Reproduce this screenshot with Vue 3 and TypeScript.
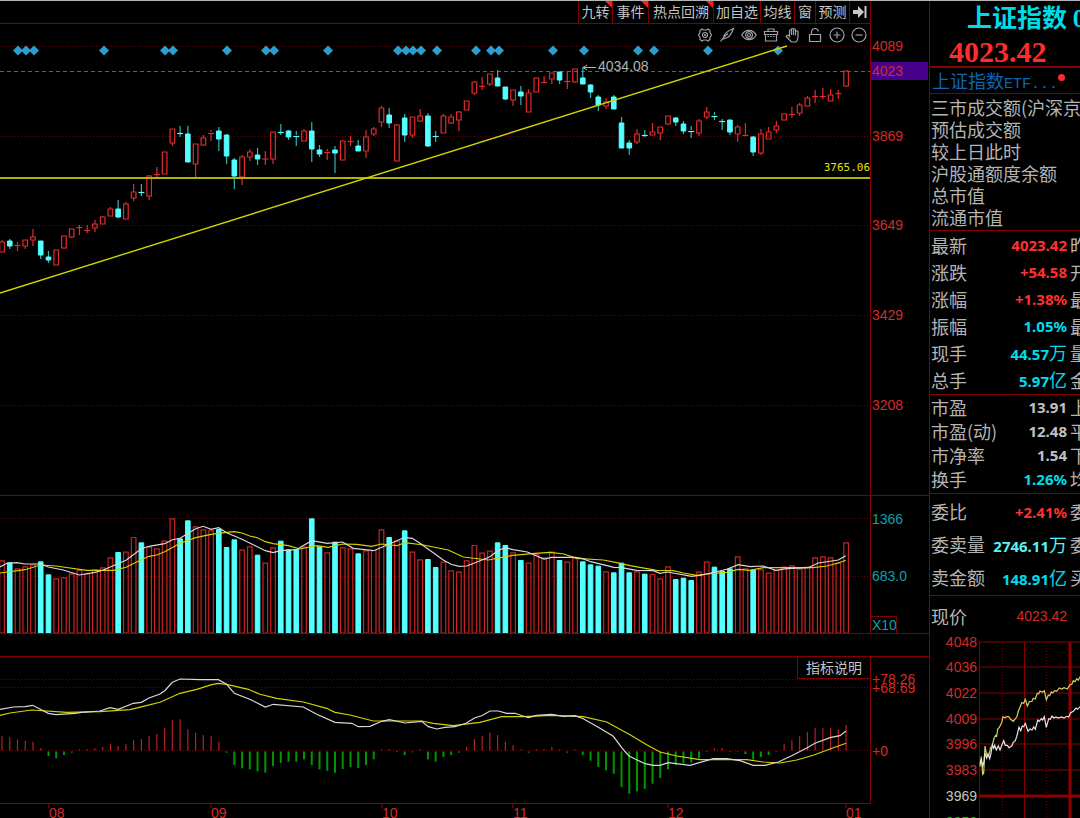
<script setup lang="ts">
type Candle = [dir: number, top: number, bottom: number, high: number, low: number]
type Pair = [number, number]

const PITCH = 7.744
const FIRST = 2

// direction (1 up, 0 down), body top, body bottom, wick top, wick bottom
const candles: Candle[] = [
  [1, 242, 252, 240, 252], [0, 241, 246, 239, 249], [1, 245, 245, 242, 251], [1, 240, 246, 240, 249],
  [1, 237, 240, 229, 246], [0, 241, 255, 241, 259], [0, 257, 260, 251, 263], [1, 250, 265, 250, 265],
  [1, 236, 248, 236, 249], [1, 229, 237, 229, 238], [1, 227, 227, 225, 235], [1, 230, 230, 225, 233],
  [1, 224, 228, 220, 232], [1, 217, 224, 216, 224], [1, 209, 216, 207, 216], [0, 209, 217, 200, 218],
  [1, 204, 219, 202, 219], [1, 192, 198, 184, 201], [0, 192, 192, 184, 196], [1, 176, 196, 175, 200],
  [1, 174, 174, 167, 179], [1, 152, 174, 152, 174], [1, 129, 143, 129, 146], [0, 133, 133, 126, 137],
  [0, 134, 162, 126, 162], [1, 144, 164, 144, 178], [1, 138, 145, 135, 146], [1, 132, 134, 130, 141],
  [0, 131, 139, 127, 151], [0, 135, 156, 134, 164], [0, 160, 176, 158, 189], [1, 157, 177, 155, 185],
  [1, 152, 157, 149, 161], [0, 155, 159, 148, 165], [1, 158, 159, 151, 165], [1, 132, 159, 132, 164],
  [0, 132, 132, 124, 135], [0, 131, 137, 130, 140], [0, 135, 137, 131, 146], [1, 131, 141, 129, 141],
  [0, 131, 149, 122, 162], [0, 150, 154, 145, 157], [1, 151, 153, 149, 160], [0, 150, 153, 146, 173],
  [1, 141, 160, 140, 160], [1, 141, 141, 136, 146], [0, 146, 151, 140, 151], [1, 137, 151, 130, 158],
  [1, 129, 134, 127, 136], [1, 108, 122, 106, 127], [0, 115, 123, 108, 128], [1, 125, 161, 124, 161],
  [0, 118, 135, 114, 142], [1, 117, 135, 117, 138], [1, 116, 121, 109, 122], [0, 116, 146, 113, 147],
  [0, 136, 136, 131, 142], [1, 116, 133, 114, 133], [1, 117, 123, 114, 124], [1, 112, 120, 111, 131],
  [1, 101, 110, 101, 110], [1, 82, 93, 81, 95], [1, 86, 86, 77, 90], [1, 74, 84, 74, 86],
  [0, 78, 86, 70, 86], [0, 87, 99, 87, 100], [1, 90, 100, 90, 106], [0, 92, 96, 86, 105],
  [1, 93, 112, 89, 112], [1, 78, 92, 78, 92], [1, 82, 82, 76, 83], [1, 73, 79, 73, 84],
  [0, 72, 80, 72, 84], [1, 81, 81, 71, 89], [1, 69, 82, 69, 83], [0, 78, 84, 67, 84],
  [0, 85, 92, 84, 98], [0, 97, 105, 95, 111], [1, 102, 106, 98, 109], [0, 97, 109, 95, 109],
  [0, 123, 148, 117, 148], [0, 143, 148, 140, 155], [1, 134, 142, 129, 144], [0, 135, 135, 130, 137],
  [1, 132, 135, 123, 135], [1, 127, 133, 127, 140], [1, 116, 124, 116, 125], [0, 118, 122, 117, 126],
  [0, 124, 131, 121, 134], [0, 130, 132, 126, 138], [1, 121, 133, 119, 136], [1, 112, 117, 107, 119],
  [0, 115, 117, 112, 120], [0, 121, 121, 119, 130], [0, 120, 132, 120, 135], [1, 127, 134, 125, 142],
  [1, 135, 135, 123, 135], [0, 137, 152, 136, 156], [1, 134, 153, 129, 155], [1, 132, 139, 127, 139],
  [1, 126, 130, 121, 133], [1, 114, 120, 114, 120], [1, 114, 114, 107, 118], [1, 105, 113, 103, 116],
  [1, 98, 106, 96, 106], [1, 96, 96, 90, 103], [1, 96, 96, 88, 99], [1, 95, 101, 89, 101],
  [1, 93, 93, 90, 99], [1, 71, 86, 71, 87],
]

// Indicator data is kept at three units per pixel.
const volumes = [
  181, 187, 205, 199, 193, 184, 223, 235, 232, 220, 210, 220, 208, 202, 172, 156, 155, 111, 127, 140,
  145, 122, 55, 115, 61, 79, 88, 91, 87, 141, 118, 149, 139, 164, 188, 142, 122, 148, 147, 140,
  55, 139, 157, 125, 142, 145, 160, 151, 150, 88, 111, 122, 91, 155, 178, 177, 201, 185, 211, 215,
  181, 135, 158, 152, 127, 135, 157, 180, 188, 162, 172, 155, 180, 185, 173, 184, 193, 197, 214, 217,
  188, 217, 214, 221, 222, 235, 199, 237, 233, 240, 215, 185, 200, 212, 205, 169, 205, 208, 208, 218,
  210, 200, 196, 206, 200, 172, 169, 172, 188, 127,
]
const macd = [
  258, 262, 268, 272, 275, 294, 318, 325, 315, 308, 298, 298, 295, 291, 281, 288, 281, 271, 268, 258,
  252, 235, 211, 208, 238, 248, 255, 258, 275, 308, 345, 355, 358, 364, 368, 348, 339, 335, 335, 328,
  345, 358, 362, 368, 357, 351, 354, 345, 328, 298, 298, 306, 315, 307, 298, 328, 335, 321, 315, 308,
  291, 268, 258, 248, 255, 275, 285, 298, 308, 298, 298, 291, 298, 308, 298, 315, 332, 351, 361, 371,
  411, 431, 424, 417, 401, 384, 358, 345, 340, 338, 325, 306, 294, 294, 306, 306, 312, 328, 321, 315,
  306, 282, 271, 258, 245, 235, 235, 235, 238, 225,
]

const volFast: Pair[] = [
  [0, 201], [20, 190], [50, 188], [75, 192], [121, 192], [145, 201], [190, 210], [238, 225], [285, 217],
  [308, 211], [378, 181], [424, 146], [447, 139], [494, 131], [517, 119], [540, 115], [587, 86], [610, 79],
  [633, 88], [656, 83], [680, 98], [726, 118], [796, 152], [819, 158], [842, 152], [889, 149], [935, 122],
  [982, 130], [1028, 126], [1060, 145], [1121, 152], [1167, 133], [1214, 112], [1237, 115], [1260, 130],
  [1330, 180], [1353, 193], [1377, 199], [1400, 198], [1446, 180], [1470, 170], [1493, 152], [1516, 143],
  [1539, 149], [1582, 156], [1632, 177], [1655, 172], [1725, 172], [1748, 176], [1772, 185], [1818, 196],
  [1841, 202], [1865, 203], [1910, 211], [1960, 212], [1980, 220], [2002, 216], [2075, 229], [2098, 226],
  [2120, 222], [2180, 208], [2215, 194], [2250, 200], [2290, 198], [2327, 211], [2360, 206], [2425, 203],
  [2455, 189], [2515, 180], [2537, 167],
]
const volSlow: Pair[] = [
  [0, 219], [75, 209], [121, 195], [168, 198], [260, 211], [340, 211], [378, 202], [424, 179], [447, 169],
  [470, 165], [494, 155], [540, 130], [587, 113], [633, 103], [680, 97], [703, 95], [726, 99], [749, 108],
  [772, 113], [796, 125], [819, 131], [865, 137], [900, 147], [950, 137], [985, 142], [1028, 132],
  [1070, 133], [1115, 139], [1144, 132], [1190, 137], [1215, 128], [1270, 135], [1345, 150], [1390, 171],
  [1465, 180], [1539, 166], [1605, 160], [1650, 157], [1692, 162], [1730, 175], [1810, 180], [1850, 188],
  [1890, 197], [1970, 211], [2020, 212], [2050, 219], [2090, 226], [2130, 221], [2180, 217], [2215, 208],
  [2250, 211], [2290, 203], [2440, 203], [2480, 198], [2515, 189], [2537, 181],
]
const dif: Pair[] = [
  [0, 178], [40, 171], [75, 170], [98, 166], [121, 178], [145, 190], [168, 194], [225, 190], [245, 187],
  [300, 183], [330, 173], [355, 178], [400, 160], [424, 157], [447, 144], [480, 132], [494, 122], [517, 97],
  [540, 87], [600, 89], [655, 89], [680, 103], [703, 130], [749, 148], [796, 171], [820, 163], [910, 171],
  [950, 193], [1005, 217], [1055, 220], [1075, 230], [1110, 229], [1145, 214], [1168, 209], [1215, 219],
  [1265, 214], [1285, 230], [1310, 237], [1335, 232], [1365, 230], [1398, 220], [1425, 203], [1445, 197],
  [1470, 183], [1495, 183], [1520, 190], [1545, 190], [1585, 203], [1610, 196], [1655, 193], [1690, 199],
  [1725, 197], [1750, 206], [1800, 235], [1840, 259], [1865, 293], [1887, 318], [1935, 341], [1960, 346],
  [1980, 346], [2005, 338], [2070, 346], [2140, 326], [2180, 326], [2220, 332], [2260, 346], [2295, 346],
  [2335, 336], [2375, 317], [2420, 294], [2445, 280], [2490, 263], [2520, 257], [2538, 243],
]
const dea: Pair[] = [
  [0, 196], [30, 189], [95, 180], [200, 187], [300, 185], [390, 179], [430, 169], [480, 157], [540, 130],
  [590, 118], [635, 104], [655, 100], [680, 103], [745, 118], [780, 133], [830, 145], [910, 156], [980, 175],
  [1005, 187], [1050, 195], [1120, 213], [1265, 213], [1300, 220], [1360, 227], [1440, 217], [1505, 200],
  [1570, 200], [1655, 196], [1750, 200], [1820, 216], [1890, 254], [1940, 284], [1980, 306], [2030, 318],
  [2100, 329], [2240, 329], [2290, 336], [2340, 339], [2390, 330], [2440, 316], [2490, 297], [2538, 280],
]
const intradayAvg: Pair[] = [
  [180, 830], [184, 800], [188, 853], [191, 850], [195, 768], [200, 795], [206, 797], [212, 772], [216, 770],
  [222, 745], [227, 736], [230, 738], [233, 717], [238, 712], [245, 698], [249, 680], [255, 683], [260, 680],
  [266, 680], [272, 688], [280, 694], [286, 686], [290, 682], [295, 664], [300, 652], [305, 638], [311, 640],
  [316, 628], [322, 648], [328, 635], [336, 634], [340, 625], [346, 627], [352, 610], [356, 612], [360, 603],
  [367, 607], [373, 602], [379, 630], [385, 615], [389, 617], [394, 606], [398, 609], [404, 602], [410, 604],
  [418, 594], [425, 597], [432, 593], [442, 597], [450, 584], [456, 582], [460, 572], [465, 575], [470, 566],
  [475, 571], [480, 560],
]
const intraday: Pair[] = [
  [180, 820], [183, 808], [188, 828], [192, 815], [194, 790], [200, 805], [204, 792], [209, 806], [213, 790],
  [217, 765], [221, 775], [224, 766], [229, 780], [235, 768], [240, 780], [246, 764], [251, 752], [256, 766],
  [262, 766], [267, 773], [275, 768], [280, 757], [286, 752], [290, 740], [297, 712], [302, 722], [307, 708],
  [311, 710], [316, 700], [324, 724], [330, 717], [336, 720], [341, 711], [346, 718], [353, 690], [358, 694],
  [364, 686], [368, 690], [373, 680], [379, 712], [386, 686], [391, 688], [396, 678], [402, 684], [408, 681],
  [414, 684], [425, 681], [432, 684], [440, 679], [446, 681], [452, 668], [460, 664], [468, 654], [473, 658],
  [480, 650],
]

const x = (i: number): number => FIRST + i * PITCH
const line = (pts: Pair[], dx: number, dy: number): string =>
  pts.map(([px, py]) => `${(dx + px / 3).toFixed(1)},${(dy + py / 3).toFixed(1)}`).join(' ')
const diamond = (cx: number): string => `M${cx - 5} 50.5L${cx} 45.5L${cx + 5} 50.5L${cx} 55.5Z`

const events = [18, 26, 34, 104, 165, 173, 227, 266, 274, 328, 398, 406, 413, 421, 437, 476, 491, 499, 553, 584, 638, 654, 708, 778]
const priceTicks = [{ y: 46, t: '4089' }, { y: 136, t: '3869' }, { y: 225, t: '3649' }, { y: 315, t: '3429' }, { y: 405, t: '3208' }]
const months = [{ x: 49, t: '08' }, { x: 211, t: '09' }, { x: 382, t: '10' }, { x: 513, t: '11' }, { x: 668, t: '12' }, { x: 846, t: '01' }]
const tabs = [
  { t: '九转', hot: true, w: 'w34' }, { t: '事件', hot: true, w: 'w36' }, { t: '热点回溯', hot: true, w: 'w65' },
  { t: '加自选', hot: false, w: 'w47' }, { t: '均线', hot: false, w: 'w34' }, { t: '窗', hot: false, w: 'w21' },
  { t: '预测', hot: false, w: 'w34' },
]
const market = ['三市成交额(沪深京)', '预估成交额', '较上日此时', '沪股通额度余额', '总市值', '流通市值']

interface Row { k: string; v: string; u?: string; c: string; n: string }
const groups: { cls: string; rows: Row[] }[] = [
  { cls: 'quote', rows: [
    { k: '最新', v: '4023.42', c: 'up', n: '昨' },
    { k: '涨跌', v: '+54.58', c: 'up', n: '开' },
    { k: '涨幅', v: '+1.38%', c: 'up', n: '最' },
    { k: '振幅', v: '1.05%', c: 'aqua', n: '最' },
    { k: '现手', v: '44.57', u: '万', c: 'aqua', n: '量' },
    { k: '总手', v: '5.97', u: '亿', c: 'aqua', n: '金' },
  ] },
  { cls: 'ratio', rows: [
    { k: '市盈', v: '13.91', c: 'plain', n: '上' },
    { k: '市盈(动)', v: '12.48', c: 'plain', n: '平' },
    { k: '市净率', v: '1.54', c: 'plain', n: '下' },
    { k: '换手', v: '1.26%', c: 'aqua', n: '均' },
  ] },
  { cls: 'order', rows: [
    { k: '委比', v: '+2.41%', c: 'up', n: '委' },
    { k: '委卖量', v: '2746.11', u: '万', c: 'light', n: '委' },
    { k: '卖金额', v: '148.91', u: '亿', c: 'aqua', n: '买' },
  ] },
]
const miniTicks = [
  { y: 642, l: 642, t: '4048', c: 'red' }, { y: 667, l: 667, t: '4036', c: 'red' }, { y: 693, l: 693, t: '4022', c: 'red' },
  { y: 719, l: 719, t: '4009', c: 'red' }, { y: 744, l: 744, t: '3996', c: 'red' }, { y: 770, l: 770, t: '3983', c: 'red' },
  { y: 796, l: 796, t: '3969', c: 'base' }, { y: 822, l: 822, t: '3956', c: 'green' },
]
</script>

<template>
  <div class="terminal">
    <main class="main">
      <div class="toolbar">
        <nav class="tabs">
          <button v-for="tab in tabs" :key="tab.t" type="button" class="tab" :class="[tab.w, { hot: tab.hot }]">{{ tab.t }}</button>
          <button type="button" class="tab w21" aria-label="收起侧栏">
            <svg class="collapse" viewBox="0 0 14 12"><path d="M0 4H5V0L11 6L5 12V8H0Z" /><path d="M11.5 0H13.5V12H11.5Z" /></svg>
          </button>
        </nav>
        <div class="axis"></div>
      </div>

      <section class="panel price">
        <svg class="plot" viewBox="0 24 870 471" preserveAspectRatio="none">
          <line v-for="g in priceTicks" :key="g.t" class="grid" x1="0" x2="870" :y1="g.y + 0.5" :y2="g.y + 0.5" />
          <line class="last" x1="0" x2="870" y1="71.5" y2="71.5" />
          <path v-for="e in events" :key="e" class="event" :d="diamond(e)" />
          <g v-for="(c, i) in candles" :key="i" :class="c[0] ? 'rise' : 'fall'">
            <line v-if="c[3] < c[1]" :x1="x(i)" :x2="x(i)" :y1="c[3]" :y2="c[1]" />
            <line v-if="c[4] > c[2]" :x1="x(i)" :x2="x(i)" :y1="c[2]" :y2="c[4]" />
            <rect v-if="c[2] - c[1] > 2" :x="x(i) - 2.3" :y="c[1]" width="4.6" :height="c[2] - c[1]" />
            <line v-else class="cross" :x1="x(i) - 3" :x2="x(i) + 3" :y1="(c[1] + c[2]) / 2 + 0.5" :y2="(c[1] + c[2]) / 2 + 0.5" />
          </g>
          <line class="level" x1="0" x2="870" y1="178" y2="178" />
          <line class="trend" x1="0" x2="787" y1="293" y2="46" />
          <path class="pointer" d="M583 67.5H596M587 65L583 67.5L587 70" />
          <text class="peak" x="598" y="71">4034.08</text>
          <text class="level-text" x="870" y="171" text-anchor="end">3765.06</text>
        </svg>
        <div class="axis">
          <svg viewBox="871 24 58 471">
            <rect class="mark" x="870" y="62" width="58" height="18" />
            <text v-for="g in priceTicks" :key="g.t" class="red" x="872" :y="g.y + 5">{{ g.t }}</text>
            <text class="red" x="872" y="76">4023</text>
          </svg>
        </div>
        <div class="tools">
          <button type="button" aria-label="设置"><svg viewBox="0 0 16 16"><path d="M5 2L6.500 3H9.500L11 2L13 3.500V5.500L14.500 8L13 10.500V12.500L11 14L9.500 13H6.500L5 14L3 12.500V10.500L1.500 8L3 5.500V3.500Z" /><circle cx="8" cy="8" r="2.500" /><circle cx="8" cy="8" r=".5" /></svg></button>
          <button type="button" aria-label="画线"><svg viewBox="0 0 16 16"><path d="M1.500 14.500L4.500 10.500C5 7.500 8 4 14.500 1.500C13 5.500 11 9 8.500 10.500L4.500 12V10.500L9 6.500" /></svg></button>
          <button type="button" aria-label="显示"><svg viewBox="0 0 16 16"><path d="M.8 8C4 1.800 12 1.800 15.200 8C12 14.200 4 14.200 .8 8Z" /><circle cx="8" cy="8" r="3.400" /><circle cx="8" cy="8" r="1.500" /></svg></button>
          <button type="button" aria-label="工具箱"><svg viewBox="0 0 16 16"><path d="M5 4V2H11V4M1.500 4.500H14.500V7.500H1.500ZM2.500 7.500V14H13.500V7.500M4.500 9.500H6M7.200 9.500H8.800M10 9.500H11.500" /></svg></button>
          <button type="button" aria-label="拖动"><svg viewBox="0 0 16 16"><path d="M4.500 9V3.500Q5.500 2 6.500 3.500V8V2Q7.500 .5 8.500 2V8V2.500Q9.500 1 10.500 2.500V8.500V4.500Q12 3 13 4.500V10Q13 13 11 15H6.500L1.200 9.500Q2 7.500 3.500 8.500L5 10.500" /></svg></button>
          <button type="button" aria-label="锁定"><svg viewBox="0 0 16 16"><path d="M2.500 7.500H13.500V14.500H2.500ZM4.500 7.500V4.500Q5 1.500 8 1.500T11.500 4.500" /></svg></button>
          <button type="button" aria-label="放大"><svg viewBox="0 0 16 16"><circle cx="8" cy="8" r="7" /><path d="M4.500 8H11.500M8 4.500V11.500" /></svg></button>
          <button type="button" aria-label="缩小"><svg viewBox="0 0 16 16"><circle cx="8" cy="8" r="7" /><path d="M4.500 8H11.500" /></svg></button>
        </div>
      </section>

      <section class="panel volume">
        <svg class="plot" viewBox="0 496 870 137" preserveAspectRatio="none">
          <line class="grid" x1="0" x2="870" y1="518.5" y2="518.5" />
          <line class="grid" x1="0" x2="870" y1="576.5" y2="576.5" />
          <g v-for="(v, i) in volumes" :key="i" :class="candles[i][0] ? 'rise' : 'fall'">
            <rect :x="x(i) - 2.3" :y="500.5 + v / 3" width="4.6" :height="(398 - v) / 3" />
          </g>
          <polyline class="slow" :points="line(volSlow, 0, 500)" />
          <polyline class="fast" :points="line(volFast, 0, 500)" />
        </svg>
        <div class="axis">
          <svg viewBox="871 496 58 137">
            <text class="teal" x="872" y="524">1366</text>
            <text class="teal" x="872" y="581">683.0</text>
            <rect class="unit-box" x="870.5" y="616.5" width="26" height="17" />
            <text class="teal" x="872" y="630">X10</text>
          </svg>
        </div>
      </section>

      <section class="panel macd">
        <svg class="plot" viewBox="0 657 870 147" preserveAspectRatio="none">
          <line class="grid" x1="0" x2="870" y1="679.5" y2="679.5" />
          <line class="grid" x1="0" x2="870" y1="687.5" y2="687.5" />
          <line class="grid" x1="0" x2="870" y1="750.5" y2="750.5" />
          <line v-for="(m, i) in macd" :key="i" :class="m < 302 ? 'pos' : 'neg'" :x1="x(i)" :x2="x(i)" :y1="m < 302 ? 750.5 : 751.5" :y2="650 + m / 3" />
          <polyline class="slow" :points="line(dea, 0, 650)" />
          <polyline class="fast" :points="line(dif, 0, 650)" />
        </svg>
        <div class="axis">
          <svg viewBox="871 657 58 147">
            <text class="red" x="872" y="684">+78.26</text>
            <text class="red" x="872" y="693">+68.69</text>
            <text class="red" x="872" y="756">+0</text>
          </svg>
        </div>
        <button type="button" class="explain">指标说明</button>
      </section>

      <svg class="dates" viewBox="0 804 929 14" preserveAspectRatio="xMinYMin slice">
        <g v-for="m in months" :key="m.t">
          <line class="tick" :x1="m.x" :x2="m.x" y1="804" y2="808" />
          <text class="red" :x="m.x" y="818">{{ m.t }}</text>
        </g>
      </svg>
    </main>

    <aside class="side">
      <header class="head">
        <h1>上证指数 <span>000001</span></h1>
        <p>4023.42</p>
      </header>
      <div class="etf"><a href="#">上证指数<span>ETF...</span></a><i></i></div>
      <ul class="market">
        <li v-for="m in market" :key="m">{{ m }}</li>
      </ul>
      <table v-for="g in groups" :key="g.cls" :class="g.cls">
        <tbody>
          <tr v-for="r in g.rows" :key="r.k">
            <th scope="row" class="key">{{ r.k }}</th>
            <td :class="r.c">{{ r.v }}<span v-if="r.u">{{ r.u }}</span></td>
            <th scope="row" class="next">{{ r.n }}</th>
          </tr>
        </tbody>
      </table>
      <div class="now"><span>现价</span><b>4023.42</b></div>
      <svg class="mini" viewBox="930 635 150 183" preserveAspectRatio="xMinYMin slice">
        <line v-for="t in miniTicks" :key="t.t" :class="t.c === 'base' ? 'thick' : 'thin'" x1="979" x2="1080" :y1="t.l" :y2="t.l" />
        <line class="thin" x1="979.5" x2="979.5" y1="642" y2="818" />
        <line class="thin" x1="1024.5" x2="1024.5" y1="642" y2="818" />
        <line class="thick" x1="1070" x2="1070" y1="642" y2="818" />
        <line class="grid" x1="1002.5" x2="1002.5" y1="642" y2="818" />
        <line class="grid" x1="1046.5" x2="1046.5" y1="642" y2="818" />
        <polyline class="avg" :points="line(intradayAvg, 920, 490)" />
        <polyline class="now-line" :points="line(intraday, 920, 490)" />
        <text v-for="t in miniTicks" :key="t.t" :class="t.c" x="977" :y="t.y + 5" text-anchor="end">{{ t.t }}</text>
      </svg>
    </aside>
  </div>
</template>

<style>
body {
  margin: 0;
  background: #000;
}
</style>

<style scoped>
.terminal {
  box-sizing: border-box;
  display: flex;
  min-height: 100vh;
  overflow: hidden;
  border-top: 1px solid #b4b4b4;
  background: #000;
  color: #b4b4b4;
  font-family: "Liberation Sans", "Noto Sans CJK SC", sans-serif;
  font-size: 14px;
}
.main {
  display: flex;
  flex: 1;
  flex-direction: column;
  min-width: 0;
}
svg {
  display: block;
}
button {
  padding: 0;
  border: 0;
  background: none;
  color: inherit;
  font: inherit;
}
.toolbar {
  display: flex;
  height: 23px;
}
.tabs {
  box-sizing: border-box;
  display: flex;
  flex: 1;
  justify-content: flex-end;
  border-bottom: 1px solid #840000;
}
.tab {
  box-sizing: border-box;
  position: relative;
  display: flex;
  align-items: center;
  justify-content: center;
  border-left: 1px solid #840000;
  line-height: 20px;
  white-space: nowrap;
  color: #c4c4c4;
}
.w21 { width: 21px; }
.w34 { width: 34px; }
.w36 { width: 36px; }
.w47 { width: 47px; }
.w65 { width: 65px; }
.hot::after {
  content: "";
  position: absolute;
  top: 0;
  right: 0;
  border-top: 7px solid #ff1c1c;
  border-left: 7px solid transparent;
}
.collapse {
  width: 14px;
  height: 12px;
  fill: #c8c8c8;
}
.axis {
  box-sizing: border-box;
  flex: 0 0 59px;
  border-left: 1px solid #840000;
}
.axis svg {
  width: 58px;
  height: 100%;
}
.panel {
  position: relative;
  display: flex;
}
.plot {
  flex: 1;
  min-width: 0;
  height: 100%;
}
.price {
  height: 471px;
  border-bottom: 1px solid #840000;
}
.volume {
  height: 137px;
  margin-bottom: 22px;
  border-bottom: 1px solid #840000;
}
.macd {
  box-sizing: border-box;
  height: 148px;
  border-top: 1px solid #840000;
}
.macd::after {
  content: "";
  position: absolute;
  right: 59px;
  bottom: 0;
  left: 0;
  border-bottom: 1px solid #900000;
}
.dates {
  width: 100%;
  height: 14px;
}
text {
  font-family: "Liberation Sans", sans-serif;
  font-size: 14px;
}
line, path, polyline, rect {
  vector-effect: non-scaling-stroke;
}
polyline {
  fill: none;
  stroke-width: 1.2;
}
.red { fill: #d42a2a; }
.green { fill: #00c800; }
.base { fill: #c8c8b4; }
.teal { fill: #0aa0ac; }
.grid {
  stroke: #700000;
  stroke-dasharray: 1 2;
}
.last {
  stroke: #dc3030;
  stroke-dasharray: 4 3;
}
.event { fill: #2d9cce; }
.rise line, .rise rect {
  fill: none;
  stroke: #e22c2c;
  stroke-width: 1.2;
}
.fall line {
  stroke: #36b4b4;
  stroke-width: 1.2;
}
.fall rect {
  fill: #54ffff;
  stroke: #54ffff;
}
.fall .cross { stroke: #54ffff; }
.level {
  stroke: #b4b400;
  stroke-width: 2;
}
.trend {
  stroke: #d2d200;
  stroke-width: 1.4;
}
.pointer {
  fill: none;
  stroke: #b4b4b4;
}
.peak { fill: #b4b4b4; }
.level-text {
  fill: #e0e000;
  font-family: "DejaVu Sans Mono", monospace;
  font-size: 11px;
}
.mark { fill: #46008c; }
.unit-box {
  fill: none;
  stroke: #840000;
}
.volume .rise rect { stroke: #c82424; }
.slow { stroke: #d2d200; }
.fast { stroke: #d8d8d8; }
.pos {
  stroke: #b42222;
  stroke-width: 1.2;
}
.neg {
  stroke: #009600;
  stroke-width: 2;
}
.tick { stroke: #a00000; }
.tools {
  position: absolute;
  top: 3px;
  right: 62px;
  display: flex;
  gap: 6px;
}
.tools svg {
  width: 16px;
  height: 16px;
  fill: none;
  stroke: #a0a0a0;
  stroke-width: 1.2;
}
.explain {
  position: absolute;
  top: 0;
  right: 58px;
  box-sizing: border-box;
  width: 74px;
  height: 22px;
  border: 1px solid #840000;
  border-top: 0;
  background: #000;
  color: #c4c4c4;
  line-height: 20px;
}
.side {
  box-sizing: border-box;
  flex: 0 0 151px;
  overflow: hidden;
  border-left: 1px solid #840000;
  font-family: "Noto Sans CJK SC", sans-serif;
  font-size: 18px;
  white-space: nowrap;
}
.head {
  height: 65px;
  border-bottom: 2px solid #840000;
}
h1 {
  margin: 0 0 0 37px;
  color: #00dce6;
  font-size: 25px;
  font-weight: 700;
  line-height: 30px;
}
h1 span {
  font-family: "Liberation Serif", serif;
}
.head p {
  margin: 0 0 0 19px;
  color: #ff2c2c;
  font: 700 30px/36px "Liberation Serif", serif;
}
.etf {
  display: flex;
  height: 25px;
  border-bottom: 1px solid #840000;
  line-height: 25px;
}
.etf a {
  margin-left: 2px;
  color: #0b66b4;
  text-decoration: none;
}
.etf span {
  font-family: "Liberation Mono", monospace;
  font-size: 15px;
}
.etf i {
  width: 7px;
  height: 7px;
  margin-top: 6px;
  border-radius: 50%;
  background: #ff2c2c;
}
.market {
  margin: 0;
  padding: 2px 0 2px 1px;
  border-bottom: 1px solid #840000;
  list-style: none;
  line-height: 22px;
}
.market li { height: 22px; }
table {
  width: 180px;
  table-layout: fixed;
  border-spacing: 0;
  border-bottom: 1px solid #840000;
}
th, td {
  padding: 0;
  font-weight: 400;
}
th { text-align: left; }
.key {
  width: 53px;
  padding-left: 1px;
}
td {
  width: 83px;
  font: 700 15px "Noto Sans", sans-serif;
  text-align: right;
}
td span {
  font: 400 18px/20px "Noto Sans CJK SC", sans-serif;
}
.next { padding-left: 3px; }
.quote { padding: 0 0 1px; }
.quote tr { height: 27px; }
.quote th { line-height: 26px; }
.ratio { padding: 0 0 2px; }
.ratio tr { height: 24px; }
.ratio th { line-height: 24px; }
.order { padding: 1px 0; }
.order tr { height: 33px; }
.order th { line-height: 33px; }
.up { color: #ff3030; }
.aqua { color: #00dcec; }
.light { color: #54f4f4; }
.plain { color: #c0c0c0; }
.now {
  display: flex;
  align-items: center;
  justify-content: space-between;
  width: 136px;
  height: 39px;
  padding-left: 1px;
}
.now b {
  color: #d42a2a;
  font: 400 14px "Liberation Sans", sans-serif;
}
.mini {
  width: 150px;
  height: 183px;
}
.thin { stroke: #840000; }
.thick {
  stroke: #8c0000;
  stroke-width: 3;
}
.avg { stroke: #d2d264; }
.now-line { stroke: #e6e6e6; }
</style>
